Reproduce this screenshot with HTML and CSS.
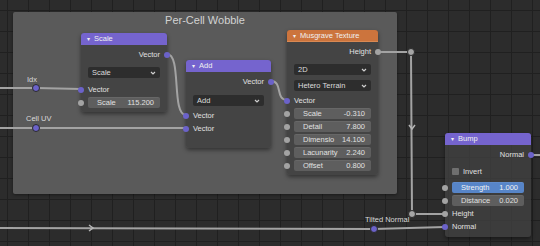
FILE: index.html
```html
<!DOCTYPE html>
<html lang="en">
<head>
  <meta charset="UTF-8">
  <title>Per-Cell Wobble</title>
  <link rel="stylesheet" href="styles.css">
</head>
<body>
  <div class="editor">
    <div class="frame">
      <div class="frame-title">Per-Cell Wobble</div>
    </div>

    <svg class="wires" width="540" height="246" viewBox="0 0 540 246">
      <path d="M0 88 L36 88 L81 89" />
      <path d="M0 128 L186 128" />
      <path d="M167 54 C182 54 171 115 186 115" />
      <path d="M271 81 C283 81 275 100 287 100" />
      <path d="M378 52 L411 52 L412 214 L445 214" />
      <path d="M0 228 L374 229 L445 227" />
      <path d="M531 155 L540 155" />
      <path class="arrow" d="M89 225 L93 228 L89 231" />
      <path class="arrow" d="M409 125 L412 129 L415 125" />
    </svg>

    <div class="label" style="left:27px;top:75px">Idx</div>
    <div class="label" style="left:26px;top:114px">Cell UV</div>
    <div class="label" style="left:365px;top:215px">Tilted Normal</div>

    <span class="reroute vec" style="left:32px;top:84px"></span>
    <span class="reroute vec" style="left:32px;top:124px"></span>
    <span class="reroute vec" style="left:370px;top:225px"></span>
    <span class="reroute flt" style="left:407px;top:48px"></span>
    <span class="reroute flt" style="left:408px;top:210px"></span>

    <!-- Scale -->
    <div class="node" style="left:81px;top:33px;width:86px">
      <div class="head vector-head"><span class="tri">&#9662;</span>Scale</div>
      <div class="body">
        <div class="row out">Vector<span class="sock vec"></span></div>
        <div class="select">Scale<svg class="chev" viewBox="0 0 6 4"><path d="M1 1 L3 3 L5 1"/></svg></div>
        <div class="row in gap-sm"><span class="sock vec"></span>Vector</div>
        <div class="field tight"><span class="sock flt"></span><span>Scale</span><span>115.200</span></div>
      </div>
    </div>

    <!-- Add -->
    <div class="node" style="left:186px;top:60px;width:85px;height:88px">
      <div class="head vector-head"><span class="tri">&#9662;</span>Add</div>
      <div class="body">
        <div class="row out">Vector<span class="sock vec"></span></div>
        <div class="select wide">Add<svg class="chev" viewBox="0 0 6 4"><path d="M1 1 L3 3 L5 1"/></svg></div>
        <div class="row in"><span class="sock vec"></span>Vector</div>
        <div class="row in"><span class="sock vec"></span>Vector</div>
      </div>
    </div>

    <!-- Musgrave Texture -->
    <div class="node" style="left:287px;top:30px;width:91px">
      <div class="head texture-head"><span class="tri">&#9662;</span>Musgrave Texture</div>
      <div class="body">
        <div class="row out">Height<span class="sock flt"></span></div>
        <div class="select">2D<svg class="chev" viewBox="0 0 6 4"><path d="M1 1 L3 3 L5 1"/></svg></div>
        <div class="select next">Hetero Terrain<svg class="chev" viewBox="0 0 6 4"><path d="M1 1 L3 3 L5 1"/></svg></div>
        <div class="row in after-select"><span class="sock vec"></span>Vector</div>
        <div class="field first"><span class="sock flt"></span><span>Scale</span><span>-0.310</span></div>
        <div class="field"><span class="sock flt"></span><span>Detail</span><span>7.800</span></div>
        <div class="field"><span class="sock flt"></span><span>Dimensio</span><span>14.100</span></div>
        <div class="field"><span class="sock flt"></span><span>Lacunarity</span><span>2.240</span></div>
        <div class="field"><span class="sock flt"></span><span>Offset</span><span>0.800</span></div>
      </div>
    </div>

    <!-- Bump -->
    <div class="node" style="left:445px;top:133px;width:86px">
      <div class="head vector-head"><span class="tri">&#9662;</span>Bump</div>
      <div class="body">
        <div class="row out">Normal<span class="sock vec"></span></div>
        <div class="row check"><span class="box"></span>Invert</div>
        <div class="field active"><span class="sock flt"></span><span>Strength</span><span>1.000</span></div>
        <div class="field"><span class="sock flt"></span><span>Distance</span><span>0.020</span></div>
        <div class="row in tight"><span class="sock flt"></span>Height</div>
        <div class="row in"><span class="sock vec"></span>Normal</div>
      </div>
    </div>
  </div>
</body>
</html>
```

FILE: styles.css
```css
body {
  margin: 0;
  background-color: #2b2b2b;
  font-family: "Liberation Sans", Arial, sans-serif;
  overflow: hidden;
}

.editor {
  position: relative;
  width: 540px;
  height: 246px;
  overflow: hidden;
  background-color: #2c2c2c;
  background-image:
    linear-gradient(#202020 1px, transparent 1px),
    linear-gradient(90deg, #202020 1px, transparent 1px);
  background-size: 21px 21px;
  background-position: 7px 10px;
}

.frame {
  position: absolute;
  left: 13px;
  top: 12px;
  width: 384px;
  height: 182px;
  background-color: #5a5a5a;
  border-radius: 2px;
  box-shadow: 0 1px 3px rgba(0, 0, 0, 0.4);
}

.frame-title {
  text-align: center;
  color: #d2d2d2;
  font-size: 11px;
  padding-top: 2px;
}

.wires {
  position: absolute;
  left: 0;
  top: 0;
}

.wires path {
  fill: none;
  stroke: #a3a3a3;
  stroke-width: 2;
}

.wires .arrow {
  stroke: #b5b5b5;
  stroke-width: 1.5;
}

.label {
  position: absolute;
  color: #dadada;
  font-size: 7.5px;
}

.reroute {
  position: absolute;
  width: 6px;
  height: 6px;
  border-radius: 50%;
  border: 1px solid #2a2a2a;
}

.reroute.vec {
  background-color: #6b62c9;
}

.reroute.flt {
  background-color: #a6a6a6;
}

.node {
  position: absolute;
  background-color: rgba(64, 64, 64, 0.82);
  border-radius: 3px;
  box-shadow: 0 2px 4px rgba(0, 0, 0, 0.45);
  color: #e0e0e0;
  font-size: 7.5px;
}

.head {
  height: 12px;
  line-height: 12px;
  padding-left: 6px;
  color: #f0f0f0;
  border-radius: 3px 3px 0 0;
  white-space: nowrap;
  overflow: hidden;
}

.vector-head {
  background-color: #7564ce;
}

.texture-head {
  background-color: #cc743d;
  box-shadow: inset 0 -1px 0 rgba(255, 200, 150, 0.25);
}

.tri {
  font-size: 6px;
  margin-right: 4px;
}

.body {
  display: flex;
  flex-direction: column;
  padding: 3px 0 4px;
}

.row {
  position: relative;
  height: 13px;
  display: flex;
  align-items: center;
  padding: 0 7px;
}

.row.out {
  justify-content: flex-end;
}

.row.gap-sm {
  margin-top: 5px;
}

.row.after-select {
  margin-top: 3px;
}

.row.check {
  margin-top: 4px;
}

.row.tight {
  margin-top: 1px;
}

.sock {
  position: absolute;
  top: 50%;
  width: 6px;
  height: 6px;
  margin-top: -3px;
  border-radius: 50%;
}

.row.out .sock {
  right: -3px;
}

.field .sock {
  left: -10px;
}

.row.in .sock {
  left: -3px;
}

.sock.vec {
  background-color: #6b62c9;
}

.sock.flt {
  background-color: #a3a3a3;
}

.select {
  height: 11px;
  margin: 6px 7px 0;
  padding: 0 4px;
  display: flex;
  align-items: center;
  justify-content: space-between;
  background-color: #2d2d2d;
  border-radius: 2px;
  color: #dcdcdc;
  white-space: nowrap;
}

.select.next {
  margin-top: 5px;
}

.select.wide {
  margin-top: 7px;
  margin-bottom: 3px;
}

.chev {
  width: 6px;
  height: 4px;
}

.chev path {
  fill: none;
  stroke: #cfcfcf;
  stroke-width: 1.2;
}

.field {
  position: relative;
  height: 11px;
  margin: 2px 7px 0;
  padding: 0 6px 0 9px;
  display: flex;
  align-items: center;
  justify-content: space-between;
  background-color: #5e5e5e;
  border-radius: 2px;
  box-shadow: inset 0 1px 0 rgba(255, 255, 255, 0.06);
  color: #e0e0e0;
  white-space: nowrap;
}

.field.tight,
.field.first {
  margin-top: 1px;
}

.field.active {
  margin-top: 4px;
  background-color: #5785c8;
  color: #f2f2f2;
}

.box {
  width: 7px;
  height: 7px;
  margin-right: 4px;
  background-color: #6f6f6f;
  border-radius: 1px;
}
```
